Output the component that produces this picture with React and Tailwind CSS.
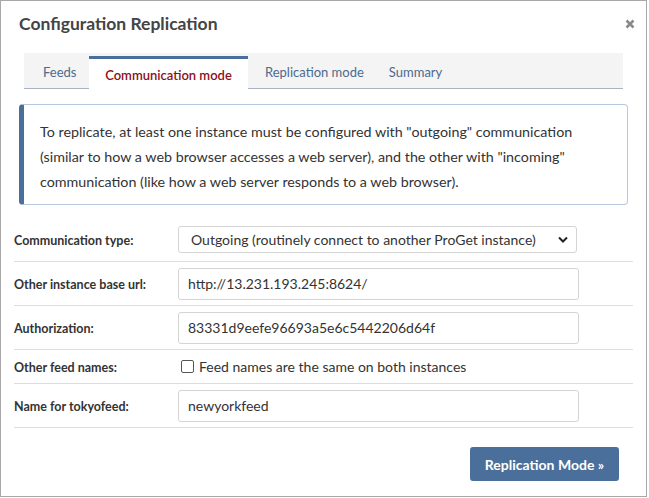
import React from "react";

const font = { fontFamily: "Lato, 'Open Sans', sans-serif" };

function Row({ label, children, h = "h-[44px]" }) {
  return (
    <div className={`flex items-center border-b border-[#dddddd] ${h}`}>
      <div className="w-[164px] pt-[3px] text-[12.5px] font-bold text-[#333333]">{label}</div>
      <div className="flex-1">{children}</div>
    </div>
  );
}

function Input({ value }) {
  return (
    <div className="w-[401px] h-[32px] border border-[#d4d4d4] rounded-[3px] flex items-center pl-[9px] text-[14px] text-[#333333]">
      {value}
    </div>
  );
}

export default function App() {
  return (
    <div className="w-[649px] h-[498px] bg-white" style={font}>
      <div className="w-[647px] h-[497px] border border-[#a8a8a8] flex flex-col">
        <div className="flex items-center justify-between pl-[18px] pr-[11px] pt-[7px] h-[40px]">
          <div className="text-[17.5px] font-bold text-[#444444]">Configuration Replication</div>
          <svg width="10" height="10" viewBox="0 0 10 10" className="-mt-[2px]">
            <path d="M1.5 1.5 L8.5 8.5 M8.5 1.5 L1.5 8.5" stroke="#8a8a8a" strokeWidth="2.6" strokeLinecap="butt" />
          </svg>
        </div>

        <div className="mx-[23px] mt-[12px] h-[36px] bg-[#f4f4f4] border-b border-[#a9b4c0] flex items-end text-[13px]">
          <div className="w-[65px] h-full flex items-center pl-[19px] pt-[4px] text-[#4c6a8c]">Feeds</div>
          <div className="w-[159px] h-[33px] bg-white border-t-[3px] border-[#4a6f9a] -mb-px flex items-center justify-center text-[#8b1020] font-semibold pt-[4px]">
            Communication mode
          </div>
          <div className="h-full flex items-center pl-[17px] pr-[25px] pt-[4px] text-[#4c6a8c]">Replication mode</div>
          <div className="h-full flex items-center pt-[4px] text-[#4c6a8c]">Summary</div>
        </div>

        <div className="mx-[18px] mt-[15px] h-[101px] border border-[#b7c9dc] border-l-[5px] border-l-[#4a6f9a] rounded-[4px] pl-[16px] pr-[40px] pt-[14px] text-[14.3px] leading-[25px] text-[#333333]">
          To replicate, at least one instance must be configured with "outgoing" communication (similar to how a web browser accesses a web server), and the other with "incoming" communication (like how a web server responds to a web browser).
        </div>

        <div className="mx-[13px] mt-[13px]">
          <Row label="Communication type:">
            <div className="w-[399px] h-[27px] border border-[#d4d4d4] rounded-[3px] flex items-center justify-between pl-[12px] pr-[8px] text-[14px] text-[#333333]">
              <span>Outgoing (routinely connect to another ProGet instance)</span>
              <svg width="10" height="7" viewBox="0 0 10 7">
                <path d="M1 1.5 L5 5.5 L9 1.5" stroke="#222222" strokeWidth="2" fill="none" />
              </svg>
            </div>
          </Row>
          <Row label="Other instance base url:">
            <Input value="http://13.231.193.245:8624/" />
          </Row>
          <Row label="Authorization:">
            <Input value="83331d9eefe96693a5e6c5442206d64f" />
          </Row>
          <Row label="Other feed names:" h="h-[34px]">
            <div className="flex items-center pl-[3px] text-[14px] text-[#333333]">
              <div className="w-[13px] h-[13px] border border-[#555555] rounded-[2px] mr-[5px]" />
              <span>Feed names are the same on both instances</span>
            </div>
          </Row>
          <Row label="Name for tokyofeed:">
            <Input value="newyorkfeed" />
          </Row>
        </div>

        <div className="flex justify-end pr-[27px] mt-[19px]">
          <div className="w-[149px] h-[34px] bg-[#4a6f9a] rounded-[3px] flex items-center justify-center text-white font-bold text-[14px]">
            Replication Mode »
          </div>
        </div>
      </div>
    </div>
  );
}
